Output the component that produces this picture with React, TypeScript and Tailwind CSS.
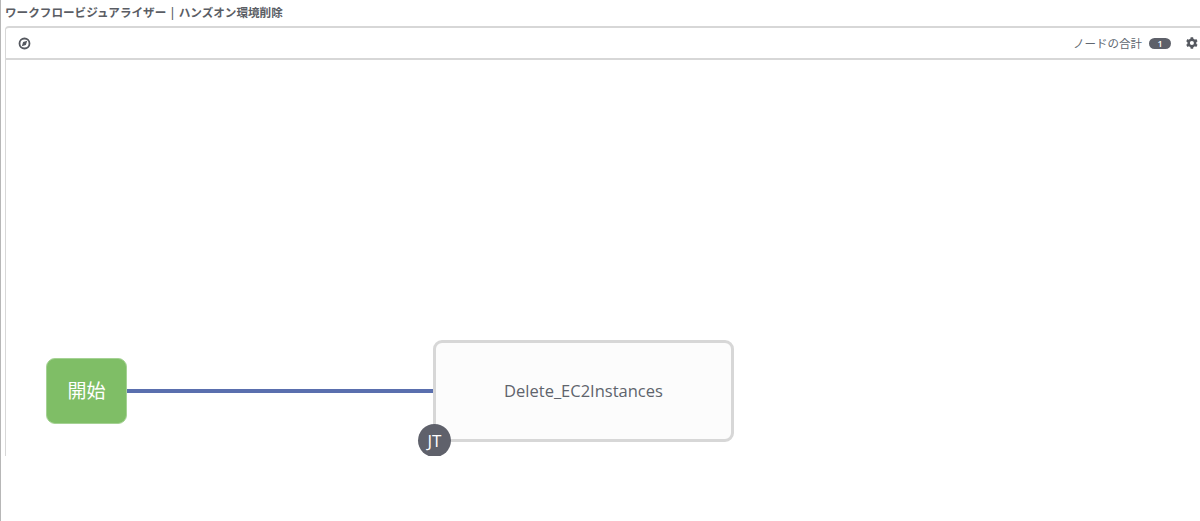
import React from "react";

const jp = { fontFamily: '"Open Sans", "Noto Sans CJK JP", sans-serif' };

export default function App() {
  return (
    <div className="w-[1200px] h-[521px] overflow-hidden bg-white border-l border-[#b7b7b7] text-[#606770]" style={jp}>
      <div className="h-[456px] flex flex-col overflow-hidden">
        <div className="h-[26px] pl-[4px] pt-[4px] text-[11.6px] leading-[18px] font-semibold text-[#5a5d64] whitespace-nowrap">
          ワークフロービジュアライザー | ハンズオン環境削除
        </div>
        <div className="ml-[4px] w-[1210px] flex-1 flex flex-col border-l border-t-2 border-[#d7d7d7] rounded-tl-[4px]">
          <div className="h-[32px] flex items-center border-b-2 border-[#d7d7d7] pl-[12px] shrink-0">
            <svg width="13" height="13" viewBox="0 0 13 13" className="shrink-0">
              <circle cx="6.5" cy="6.5" r="5" fill="none" stroke="#55585f" strokeWidth="1.8" />
              <path d="M9.2 3.8 L7.9 7.9 L3.8 9.2 L5.1 5.1 Z" fill="#55585f" />
            </svg>
            <div className="ml-[1042px] flex items-center whitespace-nowrap">
              <span className="text-[11.5px] leading-[18px] pt-[1px] text-[#606770]">ノードの合計</span>
              <span className="ml-[7px] w-[22px] h-[11px] rounded-full bg-[#5d6069] text-white text-[9px] leading-[11px] text-center font-semibold">1</span>
              <svg viewBox="0 0 24 24" width="14" height="14" className="ml-[14px] shrink-0" fill="#55585f">
                <path d="M19.4 13.5a7.7 7.7 0 0 0 0-3l2.1-1.6-2.1-3.6-2.5 1a7.6 7.6 0 0 0-2.6-1.5L13.9 2H9.7l-.4 2.8a7.6 7.6 0 0 0-2.6 1.5l-2.5-1-2.1 3.6 2.1 1.6a7.7 7.7 0 0 0 0 3l-2.1 1.6 2.1 3.6 2.5-1a7.6 7.6 0 0 0 2.6 1.5l.4 2.8h4.2l.4-2.8a7.6 7.6 0 0 0 2.6-1.5l2.5 1 2.1-3.6zM11.8 15.5a3.5 3.5 0 1 1 0-7 3.5 3.5 0 0 1 0 7z" />
              </svg>
            </div>
          </div>
          <div className="relative flex-1">
            <div className="absolute left-[121px] top-[329px] w-[308px] h-[4px] bg-[#5a6fae]" />
            <div className="absolute left-[40px] top-[298px] w-[81px] h-[66px] rounded-[9px] bg-[#7fbe66] border border-[#a5d294] flex items-center justify-center text-white text-[19px]">
              開始
            </div>
            <div className="absolute left-[427px] top-[280px] w-[301px] h-[102px] rounded-[9px] bg-[#fcfcfc] border-[3px] border-[#d7d7d7] flex items-center justify-center text-[16.5px] text-[#5f646c]">
              Delete_EC2Instances
            </div>
            <div className="absolute left-[412px] top-[364px] w-[33px] h-[33px] rounded-full bg-[#5f616b] flex items-center justify-center text-white text-[17px]">
              JT
            </div>
          </div>
        </div>
      </div>
    </div>
  );
}
